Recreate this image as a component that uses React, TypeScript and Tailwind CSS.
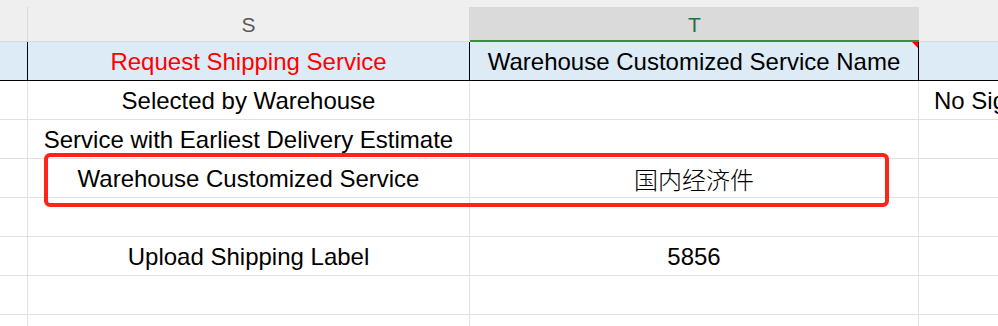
import React from 'react';

const cols = 'grid grid-cols-[28px_442px_449px_1fr]';
const sans = "font-['Liberation_Sans',Arial,sans-serif]";

interface Row {
  s?: string;
  t?: string;
  u?: string;
  cjk?: boolean;
}

const rows: Row[] = [
  { s: 'Selected by Warehouse', u: 'No Signature Service' },
  { s: 'Service with Earliest Delivery Estimate' },
  { s: 'Warehouse Customized Service', t: '国内经济件', cjk: true },
  {},
  { s: 'Upload Shipping Label', t: '5856' },
  {},
  {},
];

function DataRow({ row }: { row: Row }) {
  const cell = 'h-[39px] border-b border-r border-[#e1e1e1] leading-[40px] text-[24px] text-black whitespace-nowrap';
  return (
    <div className={cols}>
      <div className={cell} />
      <div className={`${cell} overflow-visible text-center`}>{row.s}</div>
      <div
        className={`${cell} text-center ${
          row.cjk ? "font-['Noto_Sans_CJK_SC',sans-serif] font-light text-[23px]" : ''
        }`}
      >
        {row.t}
      </div>
      <div className={`${cell} overflow-hidden border-r-0 pl-[15px]`}>{row.u}</div>
    </div>
  );
}

export default function App() {
  return (
    <div className={`relative h-[326px] w-[998px] overflow-hidden bg-white ${sans}`}>
      {/* strip above column letters */}
      <div className="h-[7px] bg-[#efefef]" />

      {/* column letters */}
      <div className={`${cols} text-[21px] leading-[35px]`}>
        <div className="h-[35px] border-r border-b border-[#d9d9d9] bg-[#efefef]" />
        <div className="h-[35px] border-r border-b border-[#d9d9d9] bg-[#efefef] text-center text-[#595959]">
          S
        </div>
        <div className="h-[35px] border-b-2 border-b-[#3f8d3c] bg-[#dadada] text-center text-[#1e7145]">
          T
        </div>
        <div className="h-[35px] border-b border-[#d9d9d9] bg-[#efefef]" />
      </div>

      {/* header row */}
      <div className={`${cols} text-[24px] leading-[39px]`}>
        <div className="h-[39px] border-r border-b border-black bg-[#ddebf7]" />
        <div className="h-[39px] border-r border-b border-black bg-[#ddebf7] text-center text-[#ff0000]">
          Request Shipping Service
        </div>
        <div className="relative h-[39px] border-r border-b border-black bg-[#ddebf7] text-center text-black">
          Warehouse Customized Service Name
          {/* comment marker */}
          <span className="absolute top-0 right-0 h-0 w-0 border-t-[6px] border-l-[6px] border-t-[#ff0000] border-l-transparent" />
        </div>
        <div className="h-[39px] border-b border-black bg-[#ddebf7]" />
      </div>

      {rows.map((row, i) => (
        <DataRow key={i} row={row} />
      ))}

      {/* highlight box */}
      <div className="pointer-events-none absolute top-[153px] left-[44px] h-[54px] w-[845px] rounded-[6px] border-4 border-[#ff2419]" />
    </div>
  );
}
